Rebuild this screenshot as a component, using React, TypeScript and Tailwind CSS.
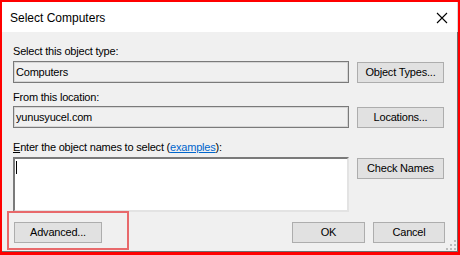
export default function App() {
  return (
    <div className="relative w-[460px] h-[255px] border-l-2 border-t-2 border-r-2 border-b-[3px] border-[#ff0000] bg-[#f0f0f0] flex flex-col font-['Liberation_Sans',Arial,sans-serif] text-black overflow-hidden">
      {/* title bar */}
      <div className="h-[30px] shrink-0 bg-white border-r border-[#d9d9d9] flex items-center justify-between pl-[8px] pr-[9px]">
        <span className="text-[12px] leading-none mt-[1px]">Select Computers</span>
        <svg width="12" height="12" viewBox="0 0 12 12" className="mt-[1px]">
          <path d="M1 1 L11 11 M11 1 L1 11" stroke="#000" strokeWidth="1.1" fill="none" />
        </svg>
      </div>

      {/* body */}
      <div className="flex-1 flex flex-col pl-[11px] pr-[12px] border-r border-b border-[#6e6e6e] text-[11px] leading-[13px] tracking-[-0.2px]">
        <div className="mt-[13px]">Select this object type:</div>
        <div className="mt-[3px] flex items-start gap-[8px]">
          <div className="w-[336px] h-[22px] border border-[#7a7a7a] shadow-[inset_0_0_0_1px_#d6d6d6] bg-[#f0f0f0] flex items-center pl-[2px]">
            Computers
          </div>
          <button className="mt-[1px] w-[87px] h-[21px] bg-[#e1e1e1] border border-[#adadad] text-[11px]">
            Object Types...
          </button>
        </div>

        <div className="mt-[8px]">From this location:</div>
        <div className="mt-[2px] flex items-start gap-[8px]">
          <div className="w-[336px] h-[22px] border border-[#7a7a7a] shadow-[inset_0_0_0_1px_#d6d6d6] bg-[#f0f0f0] flex items-center pl-[2px]">
            yunusyucel.com
          </div>
          <button className="mt-[1px] w-[87px] h-[21px] bg-[#e1e1e1] border border-[#adadad] text-[11px]">
            Locations...
          </button>
        </div>

        <div className="mt-[13px]">
          <u>E</u>nter the object names to select (
          <span className="text-[#0066cc] underline">examples</span>):
        </div>
        <div className="mt-[3px] flex items-start gap-[8px]">
          <div className="w-[336px] h-[55px] bg-white border-2 border-t-[#7a7a7a] border-l-[#7a7a7a] border-r-[#e3e3e3] border-b-[#e3e3e3] pl-[1px] pt-[2px]">
            <div className="w-px h-[13px] bg-black" />
          </div>
          <button className="mt-[1px] w-[87px] h-[21px] bg-[#e1e1e1] border border-[#adadad] text-[11px]">
            Check Names
          </button>
        </div>

        <div className="mt-[10px] flex items-start">
          <button className="ml-[1px] w-[88px] h-[21px] bg-[#e1e1e1] border border-[#adadad] text-[11px]">
            Advanced...
          </button>
          <div className="ml-auto flex gap-[8px]">
            <button className="w-[73px] h-[21px] bg-[#e1e1e1] border border-[#adadad] text-[11px]">
              OK
            </button>
            <button className="w-[72px] h-[21px] bg-[#e1e1e1] border border-[#adadad] text-[11px]">
              Cancel
            </button>
          </div>
        </div>
      </div>

      {/* size grip */}
      <svg width="11" height="11" viewBox="0 0 11 11" className="absolute right-[1px] bottom-[1px]">
        <rect x="8" y="0" width="2" height="2" fill="#bcbcbc" />
        <rect x="4" y="4" width="2" height="2" fill="#bcbcbc" />
        <rect x="8" y="4" width="2" height="2" fill="#bcbcbc" />
        <rect x="0" y="8" width="2" height="2" fill="#bcbcbc" />
        <rect x="4" y="8" width="2" height="2" fill="#bcbcbc" />
        <rect x="8" y="8" width="2" height="2" fill="#bcbcbc" />
      </svg>

      {/* annotation highlight */}
      <div className="absolute left-[5px] top-[209px] w-[122px] h-[39px] border-2 border-[#e8696b] pointer-events-none" />
    </div>
  );
}
